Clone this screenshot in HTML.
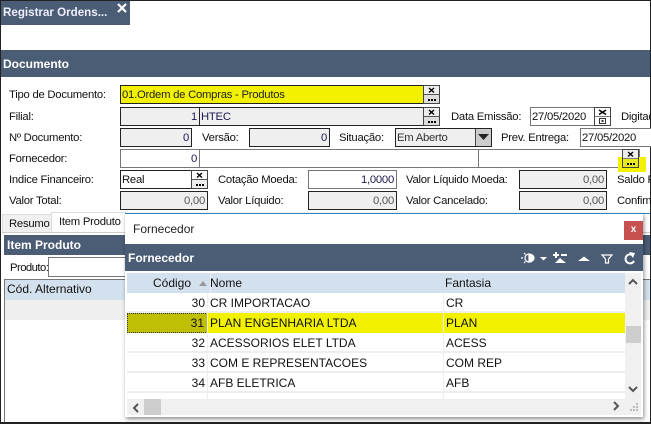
<!DOCTYPE html>
<html><head><meta charset="utf-8"><style>
html,body{margin:0;padding:0;background:#fff}
#p{position:relative;width:651px;height:424px;overflow:hidden;background:#fff;font:11.3px "Liberation Sans",sans-serif;letter-spacing:-.25px;color:#111}
#p div{position:absolute;box-sizing:border-box;white-space:nowrap}
.l{height:16px;line-height:16px}
.f{border:1px solid #222;height:19px;line-height:18px;padding:0 2px;background:#fff;color:#1a1a50;overflow:hidden}
.g{background:#efefef}
.r{text-align:right}
.gb{border-color:#777}
.b{width:17px;height:19px;border:1px solid #444;background:#ddd}
.b svg{position:absolute;left:0;top:0}
.bar{background:#4b5c75;color:#fff;font-weight:bold;font-size:12px;letter-spacing:0}
.row{left:2px;width:498px;height:20px;border-bottom:2px solid #eee;font-size:12px;line-height:20px;color:#111;letter-spacing:0}
</style></head><body><div id="p">
<div style="left:0;top:0;width:651px;height:1px;background:#222"></div>
<div style="left:0;top:0;width:1px;height:424px;background:#222"></div>
<div style="left:0;top:422px;width:651px;height:2px;background:#222"></div>
<div style="left:650px;top:0;width:1px;height:424px;background:#222"></div>

<div class="bar" style="left:1px;top:1px;width:129px;height:24px;line-height:24px;padding-left:2px;font-size:11.6px;color:#eef">Registrar Ordens...</div>
<svg style="position:absolute;left:116px;top:2px" width="12" height="12"><path d="M2 2L10 10M10 2L2 10" stroke="#fff" stroke-width="2.2"/></svg>
<div class="bar" style="left:1px;top:50px;width:649px;height:27px;line-height:28px;padding-left:2px">Documento</div>

<div class="l" style="left:9px;top:87px">Tipo de Documento:</div>
<div class="f" style="left:120px;top:85px;width:304px;background:#f2f200;color:#222;padding-left:1px">01.Ordem de Compras - Produtos</div>
<div class="b" style="left:423px;top:85px"><svg width="15" height="17"><rect width="15" height="8" fill="#eee"/><path d="M0 8.500H15" stroke="#555"/><path d="M5 2L10 6.500M10 2L5 6.500" stroke="#000" stroke-width="1.4"/><path d="M4 13h2v2h-2zM7 13h2v2h-2zM10 13h2v2h-2z" fill="#000"/></svg></div>

<div class="l" style="left:9px;top:109px">Filial:</div>
<div class="f g r" style="left:120px;top:107px;width:80px">1</div>
<div class="f g" style="left:199px;top:107px;width:225px;padding-left:1px">HTEC</div>
<div class="b" style="left:423px;top:107px"><svg width="15" height="17"><rect width="15" height="8" fill="#eee"/><path d="M0 8.500H15" stroke="#555"/><path d="M5 2L10 6.500M10 2L5 6.500" stroke="#000" stroke-width="1.4"/><path d="M4 13h2v2h-2zM7 13h2v2h-2zM10 13h2v2h-2z" fill="#000"/></svg></div>
<div class="l" style="left:451px;top:109px">Data Emissão:</div>
<div class="f gb" style="left:530px;top:107px;width:65px;color:#111;padding-left:1px">27/05/2020</div>
<div class="b gb" style="left:594px;top:107px;background:#fff"><svg width="15" height="17"><path d="M0 8.500H15" stroke="#777"/><path d="M4 2L11 6.500M11 2L4 6.500" stroke="#000" stroke-width="1.5"/><rect x="4.500" y="10.500" width="6" height="5" fill="none" stroke="#333"/><rect x="6.500" y="12" width="2" height="2" fill="#333"/></svg></div>
<div class="l" style="left:621px;top:109px">Digitaç</div>

<div class="l" style="left:9px;top:130px">Nº Documento:</div>
<div class="f g r" style="left:120px;top:128px;width:72px">0</div>
<div class="l" style="left:202px;top:130px">Versão:</div>
<div class="f g r" style="left:249px;top:128px;width:81px">0</div>
<div class="l" style="left:339px;top:130px">Situação:</div>
<div class="f g" style="left:395px;top:128px;width:97px;padding-left:1px;color:#333">Em Aberto</div>
<div style="left:475px;top:129px;width:16px;height:17px;background:#ccc;border-left:1px solid #444"><svg style="position:absolute;left:2px;top:5px" width="11" height="7"><path d="M0 0H11L5.500 6Z" fill="#222"/></svg></div>
<div class="l" style="left:501px;top:130px">Prev. Entrega:</div>
<div class="f gb" style="left:580px;top:128px;width:75px;color:#111;padding-left:1px">27/05/2020</div>

<div class="l" style="left:9px;top:151px">Fornecedor:</div>
<div class="f r gb" style="left:120px;top:149px;width:80px">0</div>
<div class="f gb" style="left:199px;top:149px;width:280px"></div>
<div class="f gb" style="left:478px;top:149px;width:162px"></div>
<div style="left:618px;top:157px;width:28px;height:15px;background:#f2f200"></div>
<div class="b gb" style="left:622px;top:149px;background:#eee"><svg width="15" height="17"><rect y="9" width="15" height="8" fill="#e8e820"/><path d="M0 8.500H15" stroke="#777"/><path d="M5 2L10 6.500M10 2L5 6.500" stroke="#000" stroke-width="1.4"/><path d="M4 13h2v2h-2zM7 13h2v2h-2zM10 13h2v2h-2z" fill="#000"/></svg></div>

<div class="l" style="left:9px;top:172px">Indice Financeiro:</div>
<div class="f" style="left:120px;top:170px;width:72px;color:#111;padding-left:1px">Real</div>
<div class="b" style="left:191px;top:170px;background:#fff"><svg width="15" height="17"><rect y="9" width="15" height="8" fill="#eee"/><path d="M0 8.500H15" stroke="#555"/><path d="M5 2L10 6.500M10 2L5 6.500" stroke="#000" stroke-width="1.4"/><path d="M4 13h2v2h-2zM7 13h2v2h-2zM10 13h2v2h-2z" fill="#000"/></svg></div>
<div class="l" style="left:218px;top:172px">Cotação Moeda:</div>
<div class="f r gb" style="left:308px;top:170px;width:89px">1,0000</div>
<div class="l" style="left:406px;top:172px">Valor Líquido Moeda:</div>
<div class="f g r" style="left:519px;top:170px;width:88px;color:#555">0,00</div>
<div class="l" style="left:617px;top:172px">Saldo F</div>

<div class="l" style="left:9px;top:193px">Valor Total:</div>
<div class="f g r" style="left:120px;top:191px;width:88px;color:#555">0,00</div>
<div class="l" style="left:218px;top:193px">Valor Líquido:</div>
<div class="f g r" style="left:308px;top:191px;width:89px;color:#555">0,00</div>
<div class="l" style="left:406px;top:193px">Valor Cancelado:</div>
<div class="f g r" style="left:519px;top:191px;width:88px;color:#555">0,00</div>
<div class="l" style="left:617px;top:193px">Confirm</div>

<div style="left:125px;top:213px;width:525px;height:1px;background:#2a86c8"></div>
<div class="l" style="left:2px;top:214px;width:50px;height:19px;background:#f0f0f0;border:1px solid #ddd;line-height:19px;padding-left:6px">Resumo</div>
<div class="l" style="left:51px;top:212px;width:75px;height:21px;background:#fff;border:1px solid #ddd;border-bottom:0;line-height:19px;padding-left:7px">Item Produto</div>
<div style="left:2px;top:232px;width:648px;height:1px;background:#ccc"></div>
<div class="bar" style="left:4px;top:235px;width:646px;height:20px;line-height:21px;padding-left:3px">Item Produto</div>
<div class="f gb" style="left:48px;top:257px;width:100px;height:20px"></div>
<div class="l" style="left:10px;top:260px;letter-spacing:-.55px">Produto:</div>
<div style="left:4px;top:279px;width:646px;height:143px;border-top:1px solid #777;border-left:1px solid #777;background:#fff"></div>
<div style="left:5px;top:280px;width:645px;height:20px;background:#d2e1ed;font-size:12px;line-height:19px;padding-left:2px;letter-spacing:0">Cód. Alternativo</div>
<div style="left:5px;top:300px;width:645px;height:20px;background:#efefef"></div>

<!-- dialog -->
<div style="left:125px;top:213px;width:518px;height:204px;background:#fff;border-top:1px solid #2a86c8;box-shadow:1px 2px 4px rgba(0,0,0,.45);letter-spacing:0">
 <div style="left:8px;top:1px;height:29px;line-height:29px;font-size:12px;color:#222">Fornecedor</div>
 <div style="left:499px;top:7px;width:19px;height:19px;background:#c75050;color:#fff;font:bold 10px/18px 'Liberation Sans',sans-serif;text-align:center">x</div>
 <div class="bar" style="left:0;top:30px;width:518px;height:27px;line-height:28px;padding-left:3px">Fornecedor</div>
 <svg style="position:absolute;left:390px;top:33px" width="125" height="21" fill="none">
  <g stroke="#fff" stroke-width="1.2"><circle cx="14" cy="11" r="4"/><path d="M14 7a5 4 0 0 1 0 8z" fill="#fff"/><path d="M6 11H8M9 6l1.500 1.500M9 16l1.500-1.500"/></g>
  <path d="M25 10H32L28.500 13.500Z" fill="#fff"/>
  <path d="M38 8H44M41 5V11M46 8H52" stroke="#fff" stroke-width="2"/>
  <path d="M40 16L45 11L51 16Z" fill="#fff"/>
  <path d="M63 14L69 9.500L75 14Z" fill="#fff"/>
  <path d="M87 8H97L93.500 12V16H90.500V12Z" stroke="#fff" stroke-width="1.200"/>
  <path d="M118 8.500A4.500 4.500 0 1 0 119 14" stroke="#fff" stroke-width="2"/><path d="M114 5L120 6L118 11Z" fill="#fff"/>
 </svg>
 <!-- grid -->
 <div style="left:2px;top:59px;width:498px;height:20px;background:#d2e1ed;font-size:12px;line-height:20px">
  <div style="left:26px;top:0">Código</div>
  <svg style="position:absolute;left:72px;top:8px" width="9" height="5"><path d="M0 5L4 0L8 5Z" fill="#999"/></svg>
  <div style="left:83px;top:0;width:1px;height:20px;background:#eef"></div>
  <div style="left:83px;top:0">Nome</div>
  <div style="left:318px;top:0">Fantasia</div>
 </div>
 <div class="row" style="top:79px"><div style="left:0;width:78px;text-align:right">30</div><div style="left:83px">CR IMPORTACAO</div><div style="left:319px">CR</div></div>
 <div class="row" style="top:99px;background:#f2f200;border-bottom-color:#f2f200"><div style="left:0;top:0;width:81px;height:20px;background:#bfbf05;border:1px dotted #333;text-align:right;padding-right:3px;line-height:18px">31</div><div style="left:83px">PLAN ENGENHARIA LTDA</div><div style="left:319px">PLAN</div></div>
 <div class="row" style="top:119px"><div style="left:0;width:78px;text-align:right">32</div><div style="left:83px">ACESSORIOS ELET LTDA</div><div style="left:319px">ACESS</div></div>
 <div class="row" style="top:139px"><div style="left:0;width:78px;text-align:right">33</div><div style="left:83px">COM E REPRESENTACOES</div><div style="left:319px">COM REP</div></div>
 <div class="row" style="top:159px"><div style="left:0;width:78px;text-align:right">34</div><div style="left:83px">AFB ELETRICA</div><div style="left:319px">AFB</div></div>
 <div style="left:82px;top:79px;width:1px;height:106px;background:#eee"></div>
 <div style="left:318px;top:79px;width:1px;height:106px;background:#eee"></div>
 <!-- v scroll -->
 <div style="left:500px;top:59px;width:16px;height:126px;background:#f0f0f0"></div>
 <div style="left:501px;top:112px;width:15px;height:17px;background:#cdcdcd"></div>
 <svg style="position:absolute;left:503px;top:64px" width="10" height="7"><path d="M1 6L5 2L9 6" stroke="#555" stroke-width="2" fill="none"/></svg>
 <svg style="position:absolute;left:503px;top:172px" width="10" height="7"><path d="M1 1L5 5L9 1" stroke="#555" stroke-width="2" fill="none"/></svg>
 <!-- h scroll -->
 <div style="left:2px;top:185px;width:514px;height:16px;background:#f0f0f0"></div>
 <div style="left:19px;top:185px;width:17px;height:16px;background:#cdcdcd"></div>
 <svg style="position:absolute;left:7px;top:189px" width="7" height="10"><path d="M6 1L2 5L6 9" stroke="#555" stroke-width="2" fill="none"/></svg>
 <svg style="position:absolute;left:488px;top:187px" width="7" height="10"><path d="M1 1L5 5L1 9" stroke="#555" stroke-width="2" fill="none"/></svg>
 <svg style="position:absolute;left:505px;top:189px" width="9" height="9"><path d="M6 0h2v2h-2zM3 3h2v2h-2zM6 3h2v2h-2zM0 6h2v2h-2zM3 6h2v2h-2zM6 6h2v2h-2z" fill="#bbb"/></svg>
</div>
</div></body></html>
